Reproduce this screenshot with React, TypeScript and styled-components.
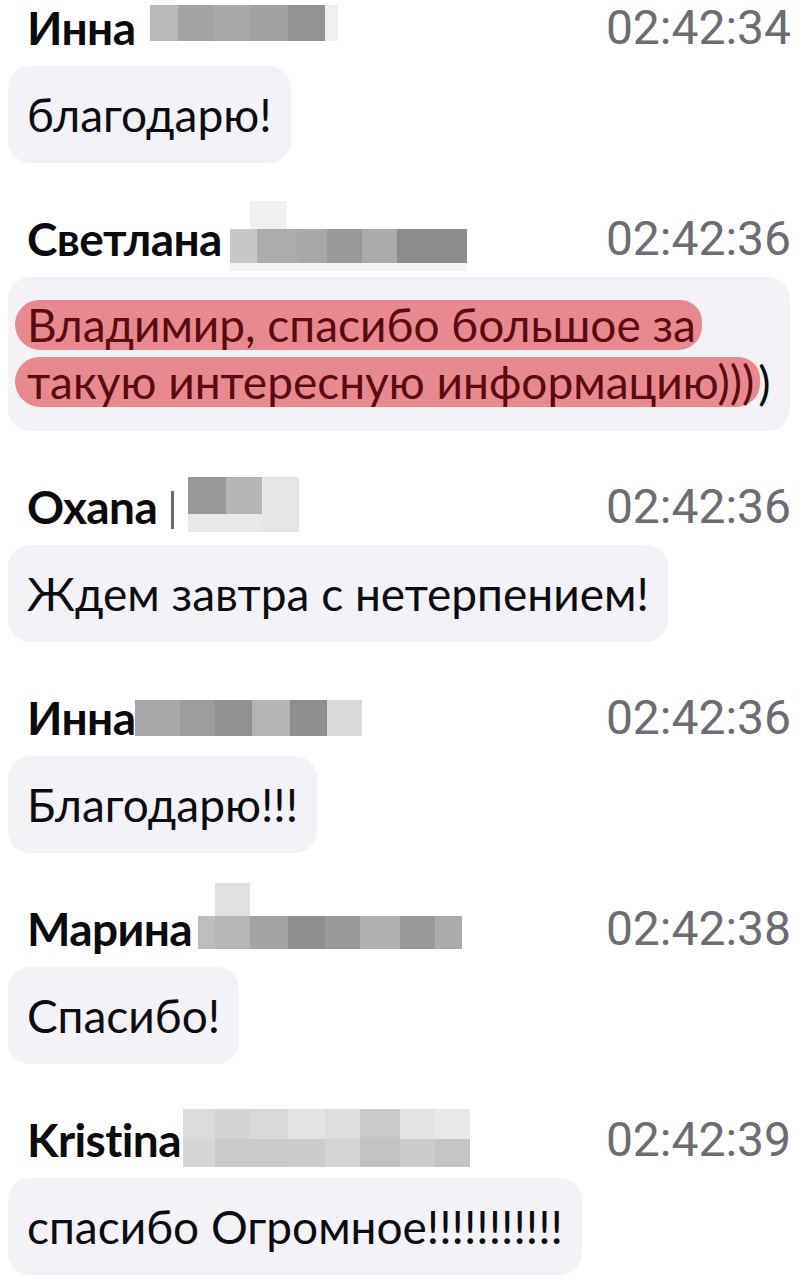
import React from 'react';
import styled, { createGlobalStyle } from 'styled-components';

type Cell = { w: number; c: string };
type Row = { h: number; cells: Cell[] };

interface Msg {
    name: string;
    time: string;
    text: React.ReactNode;
    mosaic: Row[];
    mosaicTop: number;
    mosaicGap: number;
    caret?: boolean;
}

const GlobalStyle = createGlobalStyle`
    html, body {
        margin: 0;
        padding: 0;
        background: #ffffff;
    }
    body {
        font-family: Lato, "Noto Sans", sans-serif;
        -webkit-font-smoothing: antialiased;
    }
`;

const Chat = styled.div`
    display: flex;
    flex-direction: column;
    gap: 50px;
    padding: 2px 10px 0 8px;
    width: 801px;
    box-sizing: border-box;
`;

const Message = styled.div`
    display: flex;
    flex-direction: column;
    align-items: flex-start;
    gap: 12px;
`;

const Header = styled.div`
    align-self: stretch;
    height: 52px;
    display: flex;
    justify-content: space-between;
    align-items: flex-start;
    padding-left: 19px;
`;

const Author = styled.div`
    display: flex;
    align-items: flex-start;
    height: 52px;
`;

const Name = styled.span`
    font-family: Lato, "Noto Sans", sans-serif;
    font-weight: 700;
    font-size: 46px;
    line-height: 52px;
    color: #0b0b0d;
    letter-spacing: -0.6px;
`;

const Caret = styled.span`
    width: 3px;
    height: 38px;
    margin: 10px 0 0 14px;
    background: #6a6a6a;
`;

const MosaicBox = styled.div<{ $top: number; $gap: number }>`
    display: flex;
    flex-direction: column;
    margin-top: ${(p) => p.$top}px;
    margin-left: ${(p) => p.$gap}px;
`;

const MosaicRow = styled.div<{ $h: number }>`
    display: flex;
    height: ${(p) => p.$h}px;
`;

const MosaicCell = styled.span<{ $w: number; $c: string }>`
    width: ${(p) => p.$w}px;
    background: ${(p) => p.$c};
`;

const Time = styled.span`
    font-family: Roboto, "Liberation Sans", sans-serif;
    font-size: 48px;
    line-height: 52px;
    color: #6c6c74;
    letter-spacing: 0;
`;

const Bubble = styled.div`
    background: #f2f2f7;
    border-radius: 22px;
    padding: 20px 19px;
    font-family: Lato, "Noto Sans", sans-serif;
    font-size: 46px;
    line-height: 57px;
    color: #0d0d10;
    white-space: nowrap;
`;

const Marker = styled.span`
    display: inline-block;
    vertical-align: top;
    margin: 3px -2px 0 -12px;
    padding: 0 6px 0 12px;
    line-height: 50px;
    background: #e8898f;
    color: #5a0b10;
    border-radius: 25px 22px 24px 26px;
`;

const row = (h: number, list: [number, string][]): Row => ({
    h,
    cells: list.map(([w, c]) => ({ w, c })),
});

const messages: Msg[] = [
    {
        name: 'Инна',
        time: '02:42:34',
        text: 'благодарю!',
        mosaicTop: 3,
        mosaicGap: 15,
        mosaic: [
            row(36, [
                [28, '#b9b9b9'],
                [35, '#a3a3a3'],
                [37, '#a9a9a9'],
                [38, '#a2a2a2'],
                [37, '#929292'],
                [13, '#efefef'],
            ]),
        ],
    },
    {
        name: 'Светлана',
        time: '02:42:36',
        text: (
            <>
                <Marker>Владимир, спасибо большое за</Marker>
                <br />
                <Marker>такую интересную информацию)))</Marker>)
            </>
        ),
        mosaicTop: -12,
        mosaicGap: 8,
        mosaic: [
            row(28, [
                [20, 'transparent'],
                [37, '#f0f0f0'],
            ]),
            row(34, [
                [27, '#c8c8c8'],
                [40, '#acacac'],
                [30, '#a8a8a8'],
                [35, '#9a9a9a'],
                [35, '#ababab'],
                [70, '#8c8c8c'],
            ]),
            row(8, [[237, '#f3f3f3']]),
        ],
    },
    {
        name: 'Oxana',
        time: '02:42:36',
        text: 'Ждем завтра с нетерпением!',
        mosaicTop: -4,
        mosaicGap: 14,
        caret: true,
        mosaic: [
            row(37, [
                [38, '#999999'],
                [36, '#b5b5b5'],
                [37, '#e6e6e6'],
            ]),
            row(18, [
                [74, '#e9e9e9'],
                [37, '#e6e6e6'],
            ]),
        ],
    },
    {
        name: 'Инна',
        time: '02:42:36',
        text: 'Благодарю!!!',
        mosaicTop: 8,
        mosaicGap: 0,
        mosaic: [
            row(36, [
                [45, '#a9a9a9'],
                [35, '#9c9c9c'],
                [37, '#909090'],
                [38, '#b5b5b5'],
                [37, '#8e8e8e'],
                [35, '#dadada'],
            ]),
        ],
    },
    {
        name: 'Марина',
        time: '02:42:38',
        text: 'Спасибо!',
        mosaicTop: -20,
        mosaicGap: 6,
        mosaic: [
            row(33, [
                [17, 'transparent'],
                [35, '#e0e0e0'],
            ]),
            row(33, [
                [17, '#bdbdbd'],
                [35, '#b6b6b6'],
                [38, '#a4a4a4'],
                [37, '#8f8f8f'],
                [35, '#9b9b9b'],
                [40, '#b0b0b0'],
                [35, '#9a9a9a'],
                [27, '#ababab'],
            ]),
        ],
    },
    {
        name: 'Kristina',
        time: '02:42:39',
        text: 'спасибо Огромное!!!!!!!!!!!',
        mosaicTop: -5,
        mosaicGap: 2,
        mosaic: [
            row(30, [
                [32, '#dcdcdc'],
                [35, '#d4d4d4'],
                [38, '#d9d9d9'],
                [37, '#e4e4e4'],
                [35, '#dedede'],
                [40, '#c9c9c9'],
                [35, '#e3e3e3'],
                [35, '#e9e9e9'],
            ]),
            row(28, [
                [32, '#d6d6d6'],
                [35, '#cbcbcb'],
                [38, '#cbcbcb'],
                [37, '#cdcdcd'],
                [35, '#d5d5d5'],
                [40, '#c3c3c3'],
                [35, '#cdcdcd'],
                [35, '#c4c4c4'],
            ]),
        ],
    },
];

const Mosaic: React.FC<{ rows: Row[]; top: number; gap: number }> = ({ rows, top, gap }) => (
    <MosaicBox $top={top} $gap={gap}>
        {rows.map((r, i) => (
            <MosaicRow key={i} $h={r.h}>
                {r.cells.map((cell, j) => (
                    <MosaicCell key={j} $w={cell.w} $c={cell.c} />
                ))}
            </MosaicRow>
        ))}
    </MosaicBox>
);

export default function App() {
    return (
        <>
            <GlobalStyle />
            <Chat>
                {messages.map((m, i) => (
                    <Message key={i}>
                        <Header>
                            <Author>
                                <Name>{m.name}</Name>
                                {m.caret && <Caret />}
                                <Mosaic rows={m.mosaic} top={m.mosaicTop} gap={m.mosaicGap} />
                            </Author>
                            <Time>{m.time}</Time>
                        </Header>
                        <Bubble>{m.text}</Bubble>
                    </Message>
                ))}
            </Chat>
        </>
    );
}
